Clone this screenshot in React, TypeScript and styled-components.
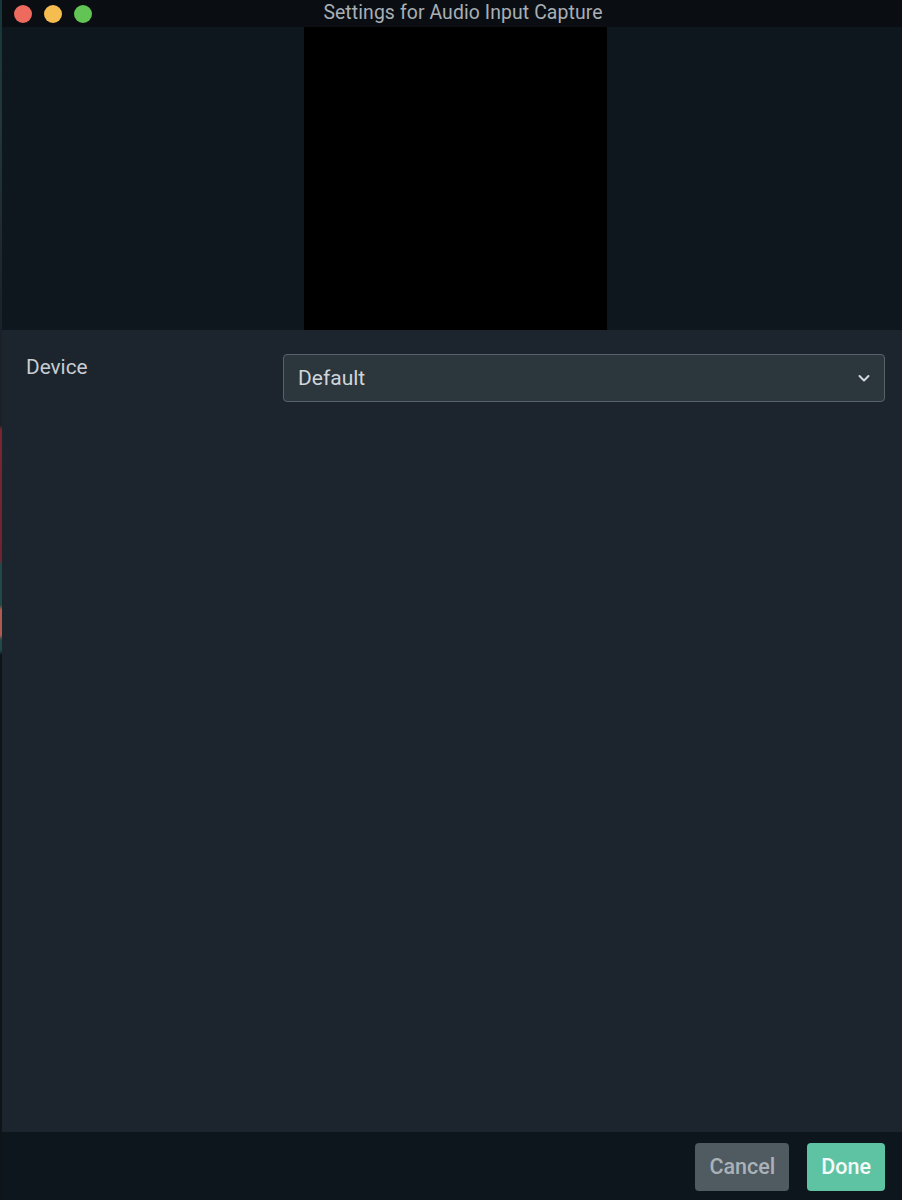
import React from 'react';
import styled, { createGlobalStyle } from 'styled-components';

const GlobalStyle = createGlobalStyle`
  html, body {
    margin: 0;
    padding: 0;
    background: #0b1117;
  }

  body {
    font-family: Roboto, "Noto Sans", "Liberation Sans", sans-serif;
  }
`;

const Screen = styled.div`
  display: flex;
  height: 1200px;
  width: 902px;
  overflow: hidden;
`;

// sliver of the desktop behind the window
const DesktopEdge = styled.div`
  flex-shrink: 0;
  width: 2px;
  background: linear-gradient(
    to bottom,
    #16383a 0px,
    #23363a 120px,
    #1b2127 330px,
    #1b2127 425px,
    #7a2630 430px,
    #6e2430 560px,
    #1f4a48 565px,
    #1f4a48 605px,
    #b05a50 610px,
    #b05a50 635px,
    #1f4a48 640px,
    #1f4a48 650px,
    #0f1418 655px,
    #0f1418 100%
  );
`;

const Window = styled.div`
  display: flex;
  flex: 1;
  flex-direction: column;
  min-width: 0;
`;

const TitleBar = styled.div`
  align-items: center;
  background: #0a0e13;
  display: flex;
  flex-shrink: 0;
  height: 27px;
  position: relative;
`;

const Lights = styled.div`
  display: flex;
  gap: 12px;
  padding-left: 12px;
`;

const Light = styled.span<{ $color: string }>`
  background: ${(p) => p.$color};
  border-radius: 50%;
  display: block;
  height: 18px;
  width: 18px;
`;

const Title = styled.div`
  color: #a8afb5;
  font-size: 19.4px;
  left: 22px;
  letter-spacing: 0.1px;
  position: absolute;
  right: 0;
  text-align: center;
  top: 1px;
  pointer-events: none;
`;

const Preview = styled.div`
  background: #0e171d;
  display: flex;
  flex-shrink: 0;
  height: 303px;
  justify-content: center;
`;

const PreviewCanvas = styled.div`
  background: #000;
  height: 100%;
  margin-left: 7px;
  width: 303px;
`;

const Body = styled.div`
  background: #1c252d;
  flex: 1;
  padding: 24px 17px 0 24px;
`;

const FieldRow = styled.div`
  align-items: flex-start;
  display: flex;
`;

const FieldLabel = styled.label`
  color: #c7cdd2;
  flex-shrink: 0;
  font-size: 20.8px;
  padding-top: 1px;
  width: 257px;
`;

const Select = styled.div`
  align-items: center;
  background: #2c363d;
  border: 1px solid #56616a;
  border-radius: 4px;
  box-sizing: border-box;
  display: flex;
  flex: 1;
  height: 48px;
  justify-content: space-between;
  padding: 0 13px 0 14px;
`;

const SelectValue = styled.span`
  color: #cfd5da;
  font-size: 21px;
`;

const Chevron = styled.svg`
  display: block;
  height: 14px;
  width: 14px;
`;

const Footer = styled.div`
  align-items: center;
  background: #0d161c;
  display: flex;
  flex-shrink: 0;
  gap: 18px;
  height: 68px;
  justify-content: flex-end;
  padding-right: 17px;
`;

const Button = styled.button<{ $primary?: boolean }>`
  background: ${(p) => (p.$primary ? '#5ec3a2' : '#4f5a61')};
  border: none;
  border-radius: 4px;
  color: ${(p) => (p.$primary ? '#f4fbf8' : '#aab2b8')};
  font-family: Roboto, "Noto Sans", "Liberation Sans", sans-serif;
  font-size: 21.5px;
  font-weight: 500;
  height: 48px;
  padding: 0 14px;
  margin-top: 1px;
`;

const App = () => (
  <Screen>
    <GlobalStyle />
    <DesktopEdge />
    <Window>
      <TitleBar>
        <Lights>
          <Light $color="#ee6a5f" />
          <Light $color="#f5bd4f" />
          <Light $color="#61c454" />
        </Lights>
        <Title>Settings for Audio Input Capture</Title>
      </TitleBar>
      <Preview>
        <PreviewCanvas />
      </Preview>
      <Body>
        <FieldRow>
          <FieldLabel>Device</FieldLabel>
          <Select>
            <SelectValue>Default</SelectValue>
            <Chevron viewBox="0 0 14 14">
              <path d="M2.5 5 L7 9.5 L11.5 5" fill="none" stroke="#d3d9dd" strokeWidth="2" strokeLinecap="round" strokeLinejoin="round" />
            </Chevron>
          </Select>
        </FieldRow>
      </Body>
      <Footer>
        <Button>Cancel</Button>
        <Button $primary>Done</Button>
      </Footer>
    </Window>
  </Screen>
);

export default App;
